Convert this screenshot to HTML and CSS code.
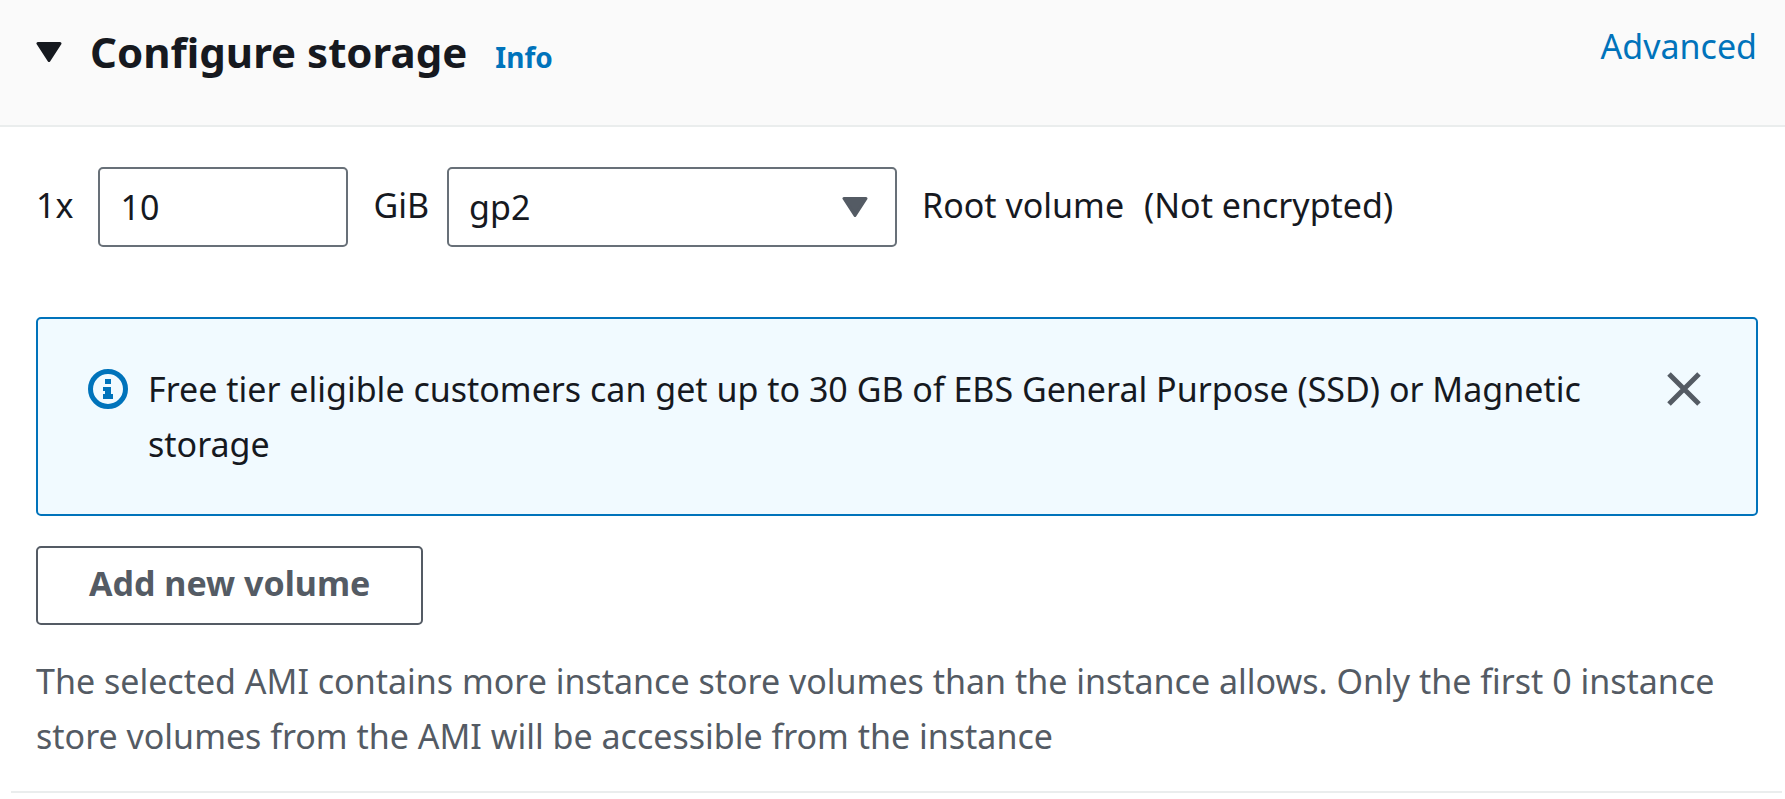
FILE: index.html
```html
<!DOCTYPE html>
<html lang="en">
<head>
<meta charset="utf-8">
<meta name="viewport" content="width=device-width, initial-scale=1">
<title>Configure storage</title>
<link rel="stylesheet" href="styles.css">
</head>
<body>
<section class="panel">
  <header class="panel-header">
    <button class="toggle" type="button" aria-expanded="true" aria-label="Collapse section">
      <svg class="caret" viewBox="0 0 26 20" aria-hidden="true"><path d="M2 1.500H24L13 18.500Z"/></svg>
    </button>
    <h2 class="title">Configure storage</h2>
    <a class="info" href="#info">Info</a>
    <a class="advanced" href="#advanced">Advanced</a>
  </header>

  <div class="panel-body">
    <div class="volume">
      <label class="count" for="size">1x</label>
      <input class="field size" id="size" type="text" value="10">
      <label class="unit" for="type">GiB</label>
      <div class="select-wrap">
        <select class="field type" id="type"><option>gp2</option></select>
        <svg class="caret select-caret" viewBox="0 0 26 20" aria-hidden="true"><path d="M2 1.500H24L13 18.500Z"/></svg>
      </div>
      <span class="role">Root volume</span>
      <span class="encryption">(Not encrypted)</span>
    </div>

    <div class="alert" role="status">
      <svg class="alert-icon" viewBox="0 0 40 40" aria-hidden="true">
        <circle cx="20" cy="20" r="17.500" fill="none" stroke="currentColor" stroke-width="5"/>
        <path d="M17 10h6v5h-6zM15 18h8v7h2v5H15v-5h2v-3h-2z" fill="currentColor"/>
      </svg>
      <p class="alert-text">Free tier eligible customers can get up to 30 GB of EBS General Purpose (SSD) or Magnetic storage</p>
      <button class="close" type="button" aria-label="Dismiss">
        <svg class="close-icon" viewBox="0 0 34 34" aria-hidden="true"><path d="M2 2L32 32M32 2L2 32"/></svg>
      </button>
    </div>

    <button class="add" type="button">Add new volume</button>
    <p class="note">The selected AMI contains more instance store volumes than the instance allows. Only the first 0 instance store volumes from the AMI will be accessible from the instance</p>
  </div>
  <hr class="divider">
</section>
</body>
</html>
```
FILE: styles.css
```css
*, *::before, *::after { box-sizing: border-box; }

body {
  margin: 0;
  background: #fff;
  color: #16191f;
  font-family: "Noto Sans", "Open Sans", sans-serif;
  font-size: 34px;
  line-height: 55px;
}

h2, p { margin: 0; }
a { color: #0073bb; text-decoration: none; }
button { padding: 0; border: 0; background: none; color: inherit; font: inherit; cursor: pointer; }

.panel-header {
  display: flex;
  align-items: baseline;
  padding: 19px 28px 40px 36px;
  background: #fafafa;
  border-bottom: 2px solid #eaeded;
}

.caret {
  display: block;
  width: 26px;
  height: 20px;
  fill: currentColor;
  stroke: currentColor;
  stroke-width: 3;
  stroke-linejoin: round;
}

.toggle { align-self: center; margin-right: 28px; }
.title { font-size: 42px; line-height: 65px; font-weight: 700; }
.info { margin-left: 28px; font-size: 28px; font-weight: 700; }
.advanced { align-self: flex-start; margin-left: auto; }

.panel-body { padding: 40px 27px 27px 36px; }

.volume { display: flex; align-items: center; margin-bottom: 70px; }
.count, .unit, .role, .encryption { padding-bottom: 4px; }

.field {
  width: 100%;
  height: 80px;
  padding: 0 20px;
  border: 2px solid #687078;
  border-radius: 5px;
  background: #fff;
  color: inherit;
  font: inherit;
}

.count { margin-right: 25px; }
.size { width: 250px; }
.unit { margin: 0 18px 0 25px; }
.select-wrap { position: relative; width: 450px; }
.type { appearance: none; }
.select-caret {
  position: absolute;
  top: 30px;
  right: 29px;
  color: #545b64;
  pointer-events: none;
}
.role { margin: 0 20px 0 25px; }

.alert {
  display: flex;
  align-items: flex-start;
  padding: 43px 55px 42px 50px;
  border: 2px solid #0073bb;
  border-radius: 5px;
  background: #f1faff;
}
.alert-icon { flex: none; width: 40px; height: 40px; margin: 7px 20px 0 0; color: #0073bb; }
.alert-text { flex: 1; }
.close { flex: none; margin: 10px 0 0 60px; color: #545b64; }
.close-icon { display: block; width: 34px; height: 34px; fill: none; stroke: currentColor; stroke-width: 5; }

.add {
  display: block;
  height: 79px;
  margin: 30px 0 29px;
  padding: 0 51px 4px;
  border: 2px solid #545b64;
  border-radius: 5px;
  background: #fff;
  color: #545b64;
  font-weight: 700;
}

.note { color: #545b64; }

.divider { height: 2px; margin: 0 3px 0 11px; border: 0; background: #eaeded; }
```
